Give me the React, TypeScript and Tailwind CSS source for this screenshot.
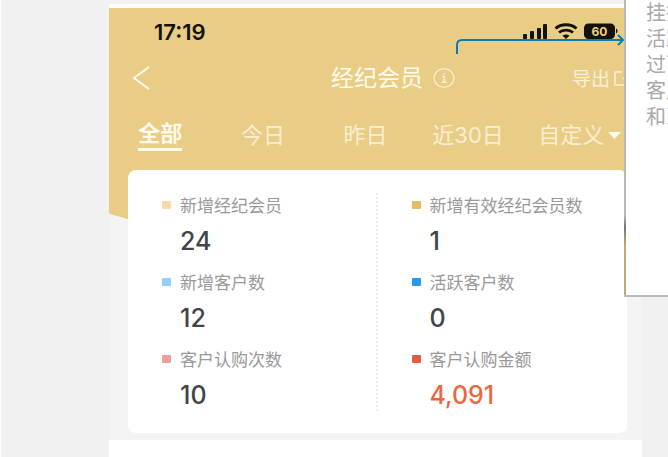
import React from "react";

type Metric = { label: string; value: string; dot: string; accent?: boolean };

const leftMetrics: Metric[] = [
  { label: "新增经纪会员", value: "24", dot: "bg-[#f5dda8]" },
  { label: "新增客户数", value: "12", dot: "bg-[#94cfff]" },
  { label: "客户认购次数", value: "10", dot: "bg-[#ef9d9d]" },
];

const rightMetrics: Metric[] = [
  { label: "新增有效经纪会员数", value: "1", dot: "bg-[#e4bd62]" },
  { label: "活跃客户数", value: "0", dot: "bg-[#2b98f0]" },
  { label: "客户认购金额", value: "4,091", dot: "bg-[#dd6046]", accent: true },
];

const tabs = ["今日", "昨日", "近30日"];

function MetricList({ items }: { items: Metric[] }) {
  return (
    <dl className="flex flex-col gap-[13px] pl-[34px]">
      {items.map((m) => (
        <div key={m.label} className="flex flex-col gap-2">
          <dt className="flex items-center gap-[9px] text-[17px] leading-6 whitespace-nowrap text-[#999999]">
            <span className={`h-2 w-[9px] shrink-0 rounded-[1px] ${m.dot}`} />
            {m.label}
          </dt>
          <dd
            className={`pl-[18px] font-['Inter','Liberation_Sans',sans-serif] text-[25px] font-medium leading-8 ${
              m.accent ? "text-[#ec6740]" : "text-[#414449]"
            }`}
          >
            {m.value}
          </dd>
        </div>
      ))}
    </dl>
  );
}

function StatusIcons() {
  return (
    <svg width="95" height="18" viewBox="0 0 95 18" fill="none" aria-hidden="true">
      <rect x="0" y="11" width="4" height="5" rx="1" fill="#15120c" />
      <rect x="7" y="8" width="4" height="8" rx="1" fill="#15120c" />
      <rect x="14" y="5" width="4" height="11" rx="1" fill="#15120c" />
      <rect x="20" y="1" width="4" height="15" rx="1" fill="#15120c" />
      <path d="M32.5 5.5C38 .5 48 .5 53.5 5.5" stroke="#15120c" strokeWidth="3" />
      <path d="M36 9.5C39.5 6.3 46.5 6.3 50 9.5" stroke="#15120c" strokeWidth="2.8" />
      <path d="M39.5 12.8C41.5 11 44.5 11 46.5 12.8L43 16Z" fill="#15120c" />
      <rect x="61" y="0.5" width="31" height="15.5" rx="4.5" fill="#15120c" />
      <path d="M93 5.5c2 .8 2 4.2 0 5z" fill="#15120c" />
      <text x="76.5" y="12.5" textAnchor="middle" fill="#ecd08a" fontFamily="Inter, sans-serif" fontSize="12" fontWeight="700">
        60
      </text>
    </svg>
  );
}

export default function App() {
  return (
    <div className="relative min-h-screen overflow-hidden border-l border-white bg-[#f1f1f1] pt-1 font-['Noto_Sans_CJK_SC',sans-serif]">
      <main className="mr-[26px] ml-[108px] border-t-4 border-white bg-[#f4f4f4]">
        <header className="bg-[#e9cc85] pt-1 pb-20 text-[#fffaea] [clip-path:polygon(0_0,100%_0,100%_85%,76%_100%,24%_100%,0_85%)]">
          <div className="flex h-10 items-center justify-between pr-6 pl-[45px]">
            <time className="font-['Inter','Liberation_Sans',sans-serif] text-[22px] leading-8 font-semibold text-[#15120c]">
              17:19
            </time>
            <StatusIcons />
          </div>

          <div className="flex h-[52px] items-center pr-2 pl-6">
            <button type="button" aria-label="返回">
              <svg width="17" height="24" viewBox="0 0 17 24" fill="none" stroke="currentColor" strokeWidth="1.8">
                <path d="M16 1L1 12l15 11" />
              </svg>
            </button>
            <div className="flex flex-1 items-center justify-center gap-2.5 pl-16">
              <h1 className="-mt-1 text-[23px] leading-8 whitespace-nowrap">经纪会员</h1>
              <button type="button" aria-label="说明" className="opacity-75">
                <svg width="22" height="20" viewBox="0 0 22 20" fill="none" stroke="currentColor" strokeWidth="1.3">
                  <ellipse cx="11" cy="10" rx="10" ry="9.3" />
                  <path d="M9 8.5h2.3V14M8.8 14.3h5M11 5v1.8" strokeWidth="1.6" />
                </svg>
              </button>
            </div>
            <button type="button" className="flex items-center gap-1 text-[19px] leading-8 whitespace-nowrap opacity-80">
              导出
              <svg width="20" height="16" viewBox="0 0 20 16" fill="none" stroke="currentColor" strokeWidth="1.5">
                <path d="M8 2H1v13h15V9M12 2h6v5M18 2L9 9" />
              </svg>
            </button>
          </div>

          <nav className="grid h-[66px] grid-cols-5 items-start pt-3.5 pr-5 font-['Inter','Noto_Sans_CJK_SC',sans-serif] text-[22px] leading-[34px] whitespace-nowrap">
            <button type="button" className="justify-self-center border-b-3 border-[#fffaea] leading-[30px] font-bold">
              全部
            </button>
            {tabs.map((t) => (
              <button key={t} type="button" className="opacity-75">
                {t}
              </button>
            ))}
            <button type="button" className="flex items-center justify-center gap-1 pl-[18px]">
              <span className="opacity-75">自定义</span>
              <svg width="13" height="7" viewBox="0 0 13 7" fill="currentColor">
                <path d="M0 0h13L6.5 7z" />
              </svg>
            </button>
          </nav>
        </header>

        <section className="relative mr-[15px] -mt-20 ml-[19px] flex rounded-lg bg-white pt-[23px] pb-[22px]">
          <div className="w-1/2">
            <MetricList items={leftMetrics} />
          </div>
          <div className="-ml-0.5 w-1/2 border-l-2 border-dotted border-[#ededed]">
            <MetricList items={rightMetrics} />
          </div>
        </section>
        <div className="mt-[7px] h-5 bg-white" />
      </main>

      <svg
        className="absolute top-[34px] right-[43px]"
        width="169"
        height="20"
        viewBox="0 0 169 20"
        fill="none"
        stroke="#087eb5"
        strokeWidth="2"
      >
        <path d="M1 20V11Q1 6 6 6H167M162 1l5 5-5 5" />
      </svg>

      <aside className="absolute top-0 right-0 flex h-[297px] w-11 overflow-hidden border-b-2 border-[#b9b9bc] bg-white">
        <div className="w-0.5 shrink-0 bg-linear-to-b from-[#b5b7bd] from-73% via-[#777777] via-77% to-[#c0a877] to-83%" />
        <p className="-mt-px pl-5 text-xl leading-[26px] whitespace-nowrap text-[#a9a9a9]">
          挂接
          <br />
          活跃
          <br />
          过百
          <br />
          客户
          <br />
          和到
        </p>
      </aside>
    </div>
  );
}
